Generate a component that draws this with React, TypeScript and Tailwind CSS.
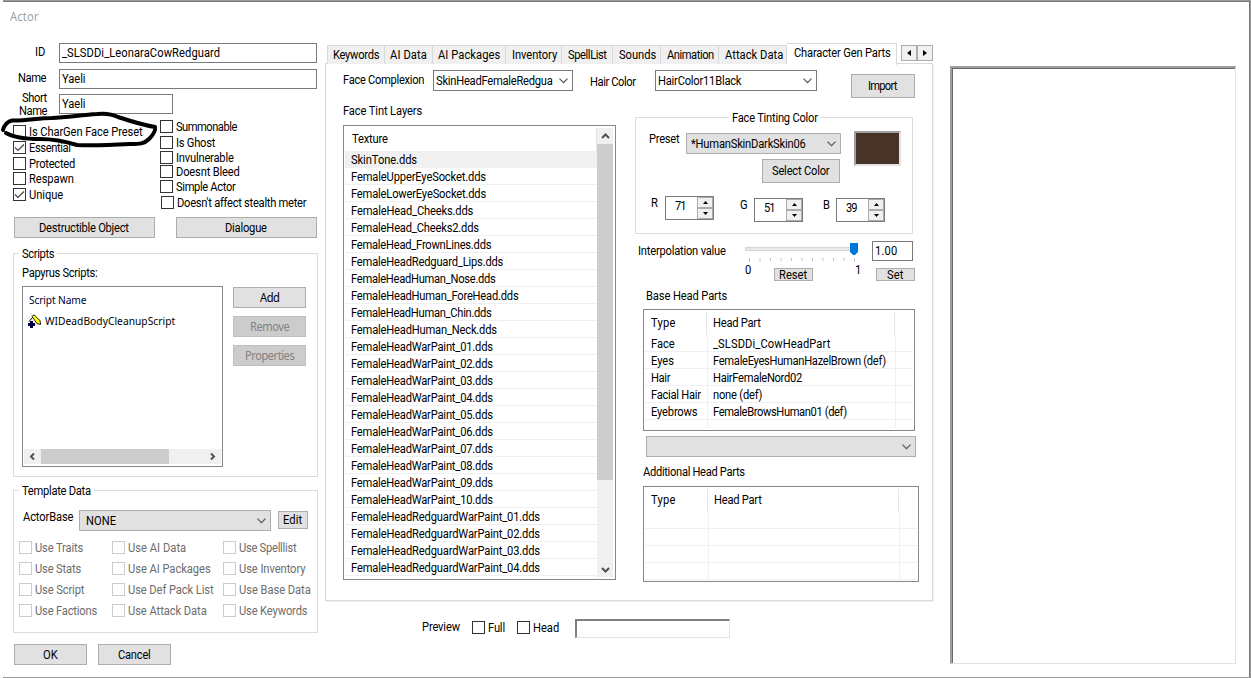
import { useLayoutEffect, useRef, useState, type ReactNode } from 'react'

// Text with a fixed advance width: slightly condensed, then spread with letter spacing
const CONDENSE = 0.93

function T({ w, children, className = '' }: { w: number; children: string; className?: string }) {
  const ref = useRef<HTMLSpanElement>(null)
  const [spacing, setSpacing] = useState(0)
  useLayoutEffect(() => {
    if (ref.current) setSpacing((w / CONDENSE - ref.current.offsetWidth) / children.length)
  }, [w, children])
  return (
    <span className={`block h-[14px] shrink-0 whitespace-pre leading-[14px] ${className}`} style={{ width: w }}>
      <span ref={ref} className="inline-block origin-left scale-x-[0.93]" style={{ letterSpacing: spacing }}>{children}</span>
    </span>
  )
}

function Box({ checked, disabled, className = '' }: { checked?: boolean; disabled?: boolean; className?: string }) {
  return (
    <span className={`block h-[13px] w-[13px] shrink-0 border bg-white ${disabled ? 'border-[#cccccc]' : 'border-[#333333]'} ${className}`}>
      {checked && (
        <svg width="11" height="11" viewBox="0 0 11 11" fill="none" stroke="#444" strokeWidth="1.2">
          <path d="M1 5.5 L4 8.5 L10 2.5" />
        </svg>
      )}
    </span>
  )
}

function Btn({ w, label, disabled, className = '', text = '' }: { w: number; label: string; disabled?: boolean; className?: string; text?: string }) {
  return (
    <button className={`flex shrink-0 items-center justify-center border pr-px ${disabled ? 'border-[#bfbfbf] bg-[#cccccc] text-[#838383]' : 'border-[#adadad] bg-[#e1e1e1]'} ${className}`}>
      <T w={w} className={text}>{label}</T>
    </button>
  )
}

function Chevron({ className = '' }: { className?: string }) {
  return (
    <svg className={`shrink-0 ${className}`} width="9" height="6" viewBox="0 0 9 6" fill="none" stroke="#555" strokeWidth="1.2">
      <path d="M0.5 0.7 L4.5 4.7 L8.5 0.7" />
    </svg>
  )
}

function Arrow({ dir }: { dir: 'up' | 'down' | 'left' | 'right' }) {
  const d = {
    up: 'M1 6 L4.5 2.5 L8 6',
    down: 'M1 3 L4.5 6.5 L8 3',
    left: 'M6 1.5 L3 4.5 L6 7.5',
    right: 'M3 1.5 L6 4.5 L3 7.5',
  }[dir]
  return (
    <svg width="9" height="9" viewBox="0 0 9 9" fill="none" stroke="#505050" strokeWidth="2">
      <path d={d} />
    </svg>
  )
}

function Group({ title, w, className = '', titleClass = 'ml-[5px]', children }: { title: string; w: number; className?: string; titleClass?: string; children: ReactNode }) {
  return (
    <section className={`border border-[#dcdcdc] ${className}`}>
      <div className={`-mt-[7px] flex w-fit bg-white px-[3px] ${titleClass}`}>
        <T w={w}>{title}</T>
      </div>
      {children}
    </section>
  )
}

function Spin({ value, className = '' }: { value: string; className?: string }) {
  return (
    <div className={`flex h-6 w-[49px] shrink-0 border border-[#7a7a7a] ${className}`}>
      <T w={11} className="ml-[9px] mt-[2px]">{value}</T>
      <div className="ml-[11px] flex w-4 flex-col">
        <span className="flex h-[11px] items-center justify-center border border-[#acacac] bg-[#f0f0f0]">
          <svg width="5" height="3" viewBox="0 0 5 3"><path d="M0 3 L2.5 0 L5 3 Z" /></svg>
        </span>
        <span className="flex h-[11px] items-center justify-center border border-[#acacac] bg-[#f0f0f0]">
          <svg width="5" height="3" viewBox="0 0 5 3"><path d="M0 0 L2.5 3 L5 0 Z" /></svg>
        </span>
      </div>
    </div>
  )
}

const leftFlags = [
  { label: 'Is CharGen Face Preset', w: 114, checked: false, h: 'h-4' },
  { label: 'Essential', w: 42, checked: true, h: 'h-4' },
  { label: 'Protected', w: 46, checked: false, h: 'h-[15px]' },
  { label: 'Respawn', w: 45, checked: false, h: 'h-4' },
  { label: 'Unique', w: 34, checked: true, h: 'h-4' },
]

const rightFlags = [
  { label: 'Summonable', w: 61, h: 'h-4' },
  { label: 'Is Ghost', w: 39, h: 'h-[15px]' },
  { label: 'Invulnerable', w: 58, h: 'h-[14px]' },
  { label: 'Doesnt Bleed', w: 64, h: 'h-[15px]' },
  { label: 'Simple Actor', w: 59, h: 'h-4' },
  { label: "Doesn't affect stealth meter", w: 129, h: 'h-4 ml-px' },
]

const templateFlags: [string, number][][] = [
  [['Use Traits', 48], ['Use Stats', 46], ['Use Script', 49], ['Use Factions', 62]],
  [['Use AI Data', 58], ['Use AI Packages', 83], ['Use Def Pack List', 86], ['Use Attack Data', 79]],
  [['Use Spelllist', 57], ['Use Inventory', 66], ['Use Base Data', 72], ['Use Keywords', 68]],
]

const tabs = [
  { label: 'Keywords', w: 46, cls: 'w-[58px] pl-[5px] border-l' },
  { label: 'AI Data', w: 37, cls: 'w-[48px] pl-[5px]' },
  { label: 'AI Packages', w: 62, cls: 'w-[73px] pl-[5px]' },
  { label: 'Inventory', w: 45, cls: 'w-[56px] pl-[6px]' },
  { label: 'SpellList', w: 39, cls: 'w-[51px] pl-[6px]' },
  { label: 'Sounds', w: 37, cls: 'w-[48px] pl-[6px]' },
  { label: 'Animation', w: 47, cls: 'w-[58px] pl-[6px]' },
  { label: 'Attack Data', w: 58, cls: 'w-[68px] pl-[6px]' },
]

const textures: [string, number][] = [
  ['SkinTone.dds', 66],
  ['FemaleUpperEyeSocket.dds', 135],
  ['FemaleLowerEyeSocket.dds', 135],
  ['FemaleHead_Cheeks.dds', 122],
  ['FemaleHead_Cheeks2.dds', 128],
  ['FemaleHead_FrownLines.dds', 140],
  ['FemaleHeadRedguard_Lips.dds', 152],
  ['FemaleHeadHuman_Nose.dds', 145],
  ['FemaleHeadHuman_ForeHead.dds', 167],
  ['FemaleHeadHuman_Chin.dds', 141],
  ['FemaleHeadHuman_Neck.dds', 146],
  ['FemaleHeadWarPaint_01.dds', 142],
  ['FemaleHeadWarPaint_02.dds', 142],
  ['FemaleHeadWarPaint_03.dds', 142],
  ['FemaleHeadWarPaint_04.dds', 142],
  ['FemaleHeadWarPaint_05.dds', 142],
  ['FemaleHeadWarPaint_06.dds', 142],
  ['FemaleHeadWarPaint_07.dds', 142],
  ['FemaleHeadWarPaint_08.dds', 142],
  ['FemaleHeadWarPaint_09.dds', 142],
  ['FemaleHeadWarPaint_10.dds', 142],
  ['FemaleHeadRedguardWarPaint_01.dds', 189],
  ['FemaleHeadRedguardWarPaint_02.dds', 189],
  ['FemaleHeadRedguardWarPaint_03.dds', 189],
  ['FemaleHeadRedguardWarPaint_04.dds', 189],
]

const headParts: [string, number, string, number][] = [
  ['Face', 24, '_SLSDDi_CowHeadPart', 117],
  ['Eyes', 23, 'FemaleEyesHumanHazelBrown (def)', 173],
  ['Hair', 19, 'HairFemaleNord02', 89],
  ['Facial Hair', 50, 'none (def)', 49],
  ['Eyebrows', 46, 'FemaleBrowsHuman01 (def)', 134],
]

const ticks = [...Array(11)].map((_, i) => i)

function LeftColumn() {
  return (
    <div className="ml-[13px] w-[305px] shrink-0">
      <div className="flex h-[26px] items-start">
        <T w={10} className="ml-[22px] mt-[2px]">ID</T>
        <div className="ml-[14px] flex h-5 w-[258px] items-center border border-[#7a7a7a] pl-[2px]"><T w={158}>_SLSDDi_LeonaraCowRedguard</T></div>
      </div>
      <div className="flex h-[25px] items-start">
        <T w={28} className="ml-[5px] mt-[2px]">Name</T>
        <div className="ml-[13px] flex h-5 w-[258px] items-center border border-[#7a7a7a] pl-[2px]"><T w={24}>Yaeli</T></div>
      </div>
      <div className="flex h-[26px] items-start">
        <div className="ml-[6px] -mt-[3px] flex w-7 flex-col items-end">
          <T w={25}>Short</T>
          <T w={28} className="-mt-px">Name</T>
        </div>
        <div className="ml-3 flex h-5 w-[114px] items-center border border-[#7a7a7a] pl-[2px]"><T w={24}>Yaeli</T></div>
      </div>
      <div className="flex h-[97px]">
        <div className="w-[147px] pt-[5px]">
          {leftFlags.map(f => (
            <div key={f.label} className={`flex items-start ${f.h}`}>
              <Box checked={f.checked} />
              <T w={f.w} className="ml-[3px]">{f.label}</T>
            </div>
          ))}
        </div>
        <div>
          {rightFlags.map(f => (
            <div key={f.label} className={`flex items-start ${f.h}`}>
              <Box />
              <T w={f.w} className="ml-[3px]">{f.label}</T>
            </div>
          ))}
        </div>
      </div>
      <div className="ml-px flex justify-between pr-px">
        <Btn w={90} label="Destructible Object" className="h-[21px] w-[141px]" />
        <Btn w={42} label="Dialogue" className="h-[21px] w-[141px]" />
      </div>
      <Group title="Scripts" w={32} className="mt-[15px] h-[224px]">
        <T w={75} className="ml-2 mt-[5px]">Papyrus Scripts:</T>
        <div className="ml-2 mt-[6px] flex items-start">
          <div className="flex h-[181px] w-[201px] flex-col border border-[#828790] p-px font-['Noto_Sans'] text-[11px]">
            <T w={57} className="ml-[5px] mt-[5px] text-[#000033]">Script Name</T>
            <div className="ml-1 mt-[7px] flex items-start">
              <svg width="14" height="14" viewBox="0 0 14 14">
                <path d="M4 2.5 L6 0.8 L12 6.5 L12.6 10.4 L9 9.6 Z" fill="#ffff00" stroke="#000" strokeWidth="0.9" />
                <path d="M1 7.5 L4.5 3.5" stroke="#000" strokeWidth="1" />
                <path d="M3.5 7 V14 M0 10.5 H7" stroke="#000040" strokeWidth="3" />
              </svg>
              <T w={130} className="ml-[3px]">WIDeadBodyCleanupScript</T>
            </div>
            <div className="mt-auto mb-px flex h-[15px] items-center bg-[#f0f0f0]">
              <span className="flex w-[17px] justify-center"><Arrow dir="left" /></span>
              <span className="h-[15px] w-32 bg-[#cdcdcd]" />
              <span className="ml-auto flex w-[17px] justify-center"><Arrow dir="right" /></span>
            </div>
          </div>
          <div className="ml-[10px] mt-px flex flex-col gap-2 font-['Noto_Sans']">
            <Btn w={19} label="Add" className="h-[21px] w-[73px]" />
            <Btn w={39} label="Remove" disabled className="h-[21px] w-[73px]" />
            <Btn w={49} label="Properties" disabled className="h-[21px] w-[73px]" />
          </div>
        </div>
      </Group>
      <Group title="Template Data" w={69} className="mt-[13px] h-[143px]">
        <div className="ml-[9px] mt-[12px] flex items-start">
          <T w={50}>ActorBase</T>
          <div className="ml-[6px] flex h-[21px] w-48 items-center justify-between border border-[#adadad] bg-[#e1e1e1] pl-[6px] pr-1">
            <T w={30}>NONE</T>
            <Chevron />
          </div>
          <Btn w={19} label="Edit" className="ml-[7px] mt-px h-[18px] w-[30px]" />
        </div>
        <div className="ml-[5px] mt-[10px] flex text-[#6d6d6d]">
          {templateFlags.map((col, i) => (
            <div key={i} className={`flex shrink-0 flex-col gap-[7px] ${i === 0 ? 'w-[93px]' : i === 1 ? 'w-[111px]' : 'w-[90px]'}`}>
              {col.map(([label, w]) => (
                <div key={label} className="flex h-[14px]">
                  <Box disabled />
                  <T w={w} className="ml-[3px]">{label}</T>
                </div>
              ))}
            </div>
          ))}
        </div>
      </Group>
      <div className="ml-px mt-[11px] flex gap-[11px]">
        <Btn w={15} label="OK" className="h-[21px] w-[73px]" />
        <Btn w={33} label="Cancel" className="h-[21px] w-[73px]" />
      </div>
    </div>
  )
}

function TextureList() {
  return (
    <div className="flex h-[455px] w-[273px] justify-between border border-[#828790] p-[2px] pl-px">
      <div className="w-[252px]">
        <div className="flex h-[23px] border-r border-[#e5e5e5] pt-1">
          <T w={36} className="ml-[7px]">Texture</T>
        </div>
        {textures.map(([name, w], i) => (
          <div key={name} className={`h-[17px] border-b border-[#f0f0f0] pl-[6px] pt-[2px] ${i === 0 ? 'bg-[#f0f0f0]' : ''}`}>
            <T w={w}>{name}</T>
          </div>
        ))}
      </div>
      <div className="flex w-4 flex-col items-center bg-[#f0f0f0]">
        <span className="flex h-4 items-center"><Arrow dir="up" /></span>
        <span className="h-[336px] w-full bg-[#cdcdcd]" />
        <span className="mt-auto flex h-4 items-center"><Arrow dir="down" /></span>
      </div>
    </div>
  )
}

function TintingGroup() {
  return (
    <Group title="Face Tinting Color" w={86} titleClass="ml-[93px]" className="h-[117px] w-[278px]">
      <div className="ml-[13px] mt-[6px] flex items-start">
        <div className="w-[192px]">
          <div className="flex items-start">
            <T w={30} className="mt-px">Preset</T>
            <div className="ml-[7px] mt-[2px] flex h-[21px] w-[155px] items-center justify-between border border-[#adadad] bg-[#e1e1e1] pl-1 pr-1">
              <T w={115}>*HumanSkinDarkSkin06</T>
              <Chevron />
            </div>
          </div>
          <Btn w={57} label="Select Color" className="ml-[113px] mt-[5px] h-6 w-[78px]" />
        </div>
        <div className="ml-[13px] h-[35px] w-[47px] border-2 border-b-[#e3e3e3] border-l-[#a0a0a0] border-r-[#e3e3e3] border-t-[#a0a0a0] bg-[#473327]" />
      </div>
      <div className="ml-[15px] mt-[13px] flex items-start">
        <T w={7}>R</T>
        <Spin value="71" className="ml-[7px]" />
        <T w={8} className="ml-[26px] mt-[2px]">G</T>
        <Spin value="51" className="ml-[6px] mt-[2px]" />
        <T w={7} className="ml-5 mt-[2px]">B</T>
        <Spin value="39" className="ml-[6px] mt-[2px]" />
      </div>
    </Group>
  )
}

function Interpolation() {
  return (
    <div className="ml-[3px] mt-[7px] flex h-[47px] items-start">
      <T w={88} className="mt-[3px]">Interpolation value</T>
      <div className="ml-[18px] w-[121px]">
        <svg className="block" width="116" height="22" viewBox="0 0 116 22">
          <rect x="1.5" y="6.5" width="110" height="3" fill="#e7eaea" stroke="#d6d6d6" />
          <path d="M106 2 H114 V11 L111 14 H109 L106 11 Z" fill="#0078d7" />
          {ticks.map(i => (
            <path key={i} d={`M${5.5 + i * 10.5} 17 V${i % 10 ? 20 : 21}`} stroke="#c4c4c4" />
          ))}
        </svg>
        <div className="flex items-start">
          <T w={6} className="ml-px">0</T>
          <Btn w={28} label="Reset" className="ml-[23px] mt-[5px] h-[13px] w-[39px]" />
          <T w={6} className="ml-[42px]">1</T>
        </div>
      </div>
      <div className="ml-[7px] flex w-[43px] flex-col">
        <div className="flex h-5 w-[41px] items-center border border-[#7a7a7a] pl-[2px]"><T w={22}>1.00</T></div>
        <Btn w={16} label="Set" className="ml-1 mt-[7px] h-[13px] w-[39px]" />
      </div>
    </div>
  )
}

function PartsPanel() {
  return (
    <div className="ml-[19px] w-[290px] pt-[6px]">
      <TintingGroup />
      <Interpolation />
      <T w={81} className="ml-[11px] mt-px">Base Head Parts</T>
      <div className="ml-2 mt-[6px] flex h-[122px] w-[272px] flex-col border border-[#828790] p-px">
        <div className="flex h-6 shrink-0 pt-px">
          <div className="w-[62px] border-r border-[#e5e5e5] pl-[6px] pt-[4px]"><T w={25}>Type</T></div>
          <div className="w-[188px] border-r border-[#e5e5e5] pl-[6px] pt-[4px]"><T w={48}>Head Part</T></div>
        </div>
        {headParts.map(([type, tw, part, pw]) => (
          <div key={type} className="flex h-[17px] shrink-0 border-b border-[#f0f0f0]">
            <div className="w-[63px] border-r border-[#f0f0f0] pl-[6px] pt-[2px]"><T w={tw}>{type}</T></div>
            <div className="w-[188px] border-r border-[#f0f0f0] pl-[5px] pt-[2px]"><T w={pw}>{part}</T></div>
          </div>
        ))}
        <div className="flex grow">
          <div className="w-[63px] border-r border-[#f0f0f0]" />
          <div className="w-[188px] border-r border-[#f0f0f0]" />
        </div>
      </div>
      <div className="ml-[11px] mt-[5px] flex h-[21px] w-[270px] items-center justify-end border border-[#adadad] bg-[#e1e1e1] pr-1"><Chevron /></div>
      <T w={102} className="ml-2 mt-2">Additional Head Parts</T>
      <div className="ml-2 mt-[7px] flex h-[96px] w-[276px] flex-col border border-[#828790] p-px">
        <div className="flex h-6 shrink-0 pt-px">
          <div className="w-[63px] border-r border-[#e5e5e5] pl-[6px] pt-[4px]"><T w={25}>Type</T></div>
          <div className="w-[191px] border-r border-[#e5e5e5] pl-[6px] pt-[4px]"><T w={48}>Head Part</T></div>
        </div>
        {[0, 1, 2, 3].map(i => (
          <div key={i} className="flex h-[17px] shrink-0 border-b border-[#f0f0f0]">
            <div className="w-16 border-r border-[#f0f0f0]" />
            <div className="w-[191px] border-r border-[#f0f0f0]" />
          </div>
        ))}
      </div>
    </div>
  )
}

function CharacterGen() {
  return (
    <div className="ml-[7px] w-[609px] shrink-0">
      <div className="flex h-[21px] items-end pl-[2px]">
        {tabs.map(t => (
          <div key={t.label} className={`h-[19px] shrink-0 border-r border-t border-[#d9d9d9] bg-[#f0f0f0] pt-[2px] ${t.cls}`}>
            <T w={t.w}>{t.label}</T>
          </div>
        ))}
        <div className="relative z-10 -mb-px h-[22px] w-[110px] shrink-0 border-r border-t border-[#d9d9d9] bg-white pl-[7px] pt-[2px]">
          <T w={97}>Character Gen Parts</T>
        </div>
        <div className="mb-[3px] ml-[4px] flex h-4 shrink-0">
          <span className="flex w-4 items-center justify-center border border-[#acacac] bg-[#f0f0f0]">
            <svg width="4" height="6" viewBox="0 0 4 6"><path d="M4 0 L0 3 L4 6 Z" /></svg>
          </span>
          <span className="flex w-4 items-center justify-center border border-[#acacac] bg-[#f0f0f0]">
            <svg width="4" height="6" viewBox="0 0 4 6"><path d="M0 0 L4 3 L0 6 Z" /></svg>
          </span>
        </div>
      </div>
      <div className="-mt-px h-[538px] w-[608px] border border-[#d9d9d9] shadow-[1px_1px_0_#f0f0f0]">
        <div className="flex h-[47px] items-start pl-[17px] pt-[6px]">
          <T w={81} className="mt-[3px]">Face Complexion</T>
          <div className="ml-[9px] flex h-[21px] w-[140px] items-center justify-between border border-[#7a7a7a] pl-[2px] pr-1">
            <T w={117}>SkinHeadFemaleRedgua</T>
            <Chevron />
          </div>
          <T w={46} className="ml-[17px] mt-[5px]">Hair Color</T>
          <div className="ml-[19px] flex h-[21px] w-[162px] items-center justify-between border border-[#7a7a7a] pl-[2px] pr-1">
            <T w={83}>HairColor11Black</T>
            <Chevron />
          </div>
          <Btn w={29} label="Import" className="ml-[34px] mt-1 h-6 w-16" />
        </div>
        <div className="flex items-start">
          <div className="ml-[17px] -mt-[7px]">
            <T w={79}>Face Tint Layers</T>
            <div className="mt-[7px]"><TextureList /></div>
          </div>
          <PartsPanel />
        </div>
      </div>
      <div className="ml-[97px] mt-[18px] flex items-start">
        <T w={38} className="mt-px">Preview</T>
        <Box className="ml-3 mt-[2px]" />
        <T w={17} className="ml-[3px] mt-[2px]">Full</T>
        <Box className="ml-3 mt-[2px]" />
        <T w={26} className="ml-[3px] mt-[2px]">Head</T>
        <div className="ml-4 h-[19px] w-[155px] border-b border-l-2 border-r border-t-2 border-b-[#e3e3e3] border-l-[#808080] border-r-[#e3e3e3] border-t-[#808080]" />
      </div>
    </div>
  )
}

export default function App() {
  return (
    <div className="relative h-[678px] w-[1251px] overflow-hidden bg-white font-['Roboto','Liberation_Sans',sans-serif] text-[12px] text-black">
      <header className="h-[43px] pl-[10px] pt-[10px] font-['Open_Sans'] text-[#999999]">
        <T w={29}>Actor</T>
      </header>
      <main className="flex items-start">
        <LeftColumn />
        <CharacterGen />
        <div className="ml-4 mt-[23px] h-[598px] w-[286px] shrink-0 border-b border-l-2 border-r border-t-2 border-b-[#e3e3e3] border-l-[#a0a0a0] border-r-[#e3e3e3] border-t-[#a0a0a0]">
          <div className="h-full border-l border-t border-[#696969]" />
        </div>
      </main>
      <div className="pointer-events-none absolute inset-y-0 left-[3px] right-0 border-b border-r border-t border-[#999999]">
        <div className="h-full border-r border-t border-[#777777]" />
      </div>
      <svg className="pointer-events-none absolute left-0 top-[108px]" width="165" height="44" viewBox="0 0 165 44" fill="none" stroke="#000" strokeWidth="4" strokeLinecap="round" strokeLinejoin="round">
        <path d="M3 22 C4 17 8 13 12 12.5 C26 13 38 10 52 10 C68 9 82 7 97 6 C106 5 112 6 118 9 C130 13 143 17 155 19 C156 24 152 28 149 31 C144 36 140 36 130 36 C112 37 92 38 77 37 C64 33 54 31 40 31 C26 31 13 29 6 25" />
      </svg>
    </div>
  )
}
